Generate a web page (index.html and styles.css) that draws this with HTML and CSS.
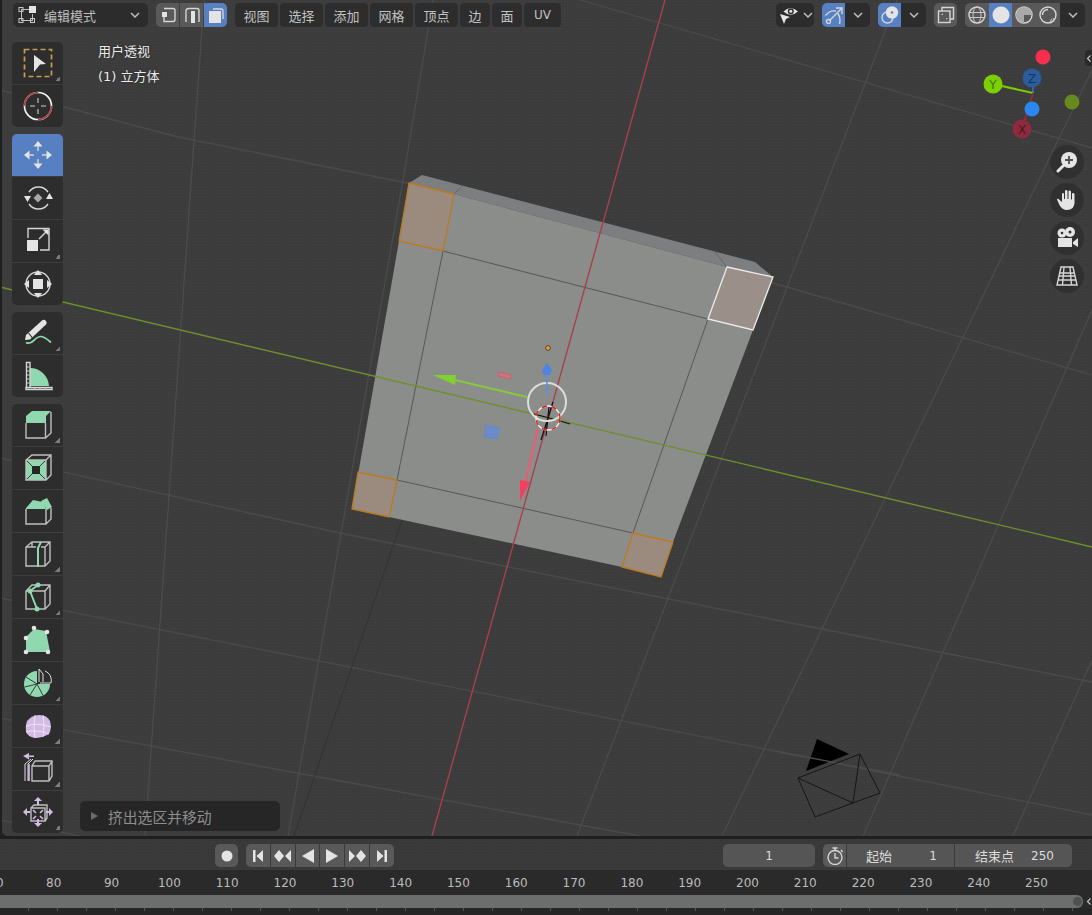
FILE: index.html
```html
<!DOCTYPE html>
<html lang="zh">
<head>
<meta charset="utf-8">
<title>Blender 编辑模式</title>
<link rel="stylesheet" href="styles.css">
</head>
<body>
<div class="workspace">
  <div class="edge"></div>
  <main class="viewport">
    <svg class="scene" viewBox="2 0 1090 836" xmlns="http://www.w3.org/2000/svg">
      <g class="grid">
        <path d="M204 0L145 836M433 0L403 180L288 836M897 0L577 836M1092 70L722 836M1092 310L863 836M1092 660L1013 836"/>
        <path d="M0 90L178 137L407 183L773 283L1092 375M580 0L760 52L1092 148M0 458L340 533L623 590L1092 682M0 598L780 752L1092 815M0 718L297 773L640 836M0 820L80 836"/>
      </g>
      <path class="thin-dark" d="M402 520L294 836"/>
      <g class="camera">
        <path class="camera-tri" d="M817 739L849 754L806 771Z"/>
        <path class="grid-over" d="M780 752L900 775"/>
        <path class="camera-frame" d="M798 778L860 754L880 793L815 817ZM798 778L853 803M860 754L853 803"/>
      </g>
      <polygon class="cube-top" points="409,183 422,175 755,262 773,277 727,267 454,194"/>
      <polygon class="cube-face" points="409,183 454,194 727,267 773,277 753,330 673,542 661,577 622,567 389,517 352,509 399,241"/>
      <path class="cube-edge-soft" d="M454 194L462 186M727 267L715 252"/>
      <path class="cube-edge" d="M443 251L708 319L633 533L397 480Z"/>
      <polygon class="face-sel" points="409,183 454,194 443,251 399,241"/>
      <polygon class="face-sel" points="358,472 397,480 389,517 352,509"/>
      <polygon class="face-sel" points="633,533 673,542 661,577 622,567"/>
      <polygon class="face-active" points="727,267 773,277 753,330 708,319"/>
      <path class="axis-green" d="M0 287L1092 547"/>
      <path class="axis-red" d="M665 0L432 836"/>
      <g class="manip">
        <path class="black" d="M534 414L553 419M560 421L570 424M553 402L541 440M549 407L546 436"/>
        <circle class="ring" cx="547" cy="402" r="19"/>
        <circle class="cur-white" cx="548" cy="418" r="12"/>
        <circle class="cur-red" cx="548" cy="418" r="12"/>
        <circle class="origin" cx="548" cy="348" r="2.4"/>
        <path class="shaft-blue" d="M547 396V373"/>
        <path class="fill-blue" d="M547 363L552 370L550 375H544L542 370Z"/>
        <path class="shaft-green" d="M527 397L455 380"/>
        <path class="fill-green" d="M456 375L433 375L455 385Z"/>
        <path class="shaft-red" d="M538 428L525 483"/>
        <path class="fill-red" d="M520 480L530 482L520 501Z"/>
        <path class="plane-red" d="M498 372L512 375L511 379L498 376Z"/>
        <path class="plane-blue" d="M486 425L500 428L497 439L484 437Z"/>
      </g>
      <g class="nav-gizmo">
        <path class="g-blue" d="M1033 93V80"/>
        <path class="g-green" d="M1033 93L993 84"/>
        <path class="g-red" d="M1033 93L1022 129"/>
        <circle class="d-red" cx="1043" cy="57" r="7.5"/>
        <circle class="d-olive" cx="1072" cy="102" r="7.5"/>
        <circle class="d-z" cx="1032" cy="78" r="9.5"/>
        <circle class="d-y" cx="993" cy="84" r="9.5"/>
        <circle class="d-x" cx="1022" cy="129" r="9.5"/>
        <circle class="d-blue" cx="1032" cy="109" r="7.5"/>
        <text class="g-z" x="1032" y="82.5">Z</text>
        <text class="g-y" x="993" y="88.5">Y</text>
        <text class="g-x" x="1022" y="133.5">X</text>
      </g>
    </svg>

    <header class="topbar">
      <div class="mode">
        <svg class="ic18" viewBox="0 0 18 18"><path class="st" d="M3 3.500H12M3.500 3V14M3 14.500H15M14.500 8V14"/><rect class="fw" x="11" y="0" width="7" height="7"/><rect class="bx" x="1" y="1.500" width="4" height="4"/><rect class="bx" x="1" y="12.500" width="4" height="4"/><rect class="bx" x="12.500" y="12.500" width="4" height="4"/></svg>
        <span class="mode-label">编辑模式</span>
        <svg class="chev" viewBox="0 0 10 6"><path d="M1 1L5 5L9 1"/></svg>
      </div>
      <div class="seg sel-mode">
        <button class="seg-btn gray w23"><svg class="ic18" viewBox="0 0 18 18"><path class="st2" d="M5 2.500H14Q16 2.500 16 4.500V13Q16 15.500 14 15.500H5V11"/><rect class="fw" x="3" y="6" width="5" height="5"/></svg></button>
        <button class="seg-btn gray w23"><svg class="ic18" viewBox="0 0 18 18"><path class="st2" d="M3 16V5Q3 2.500 6 2.500H14Q16 2.500 16 4.500V16"/><rect class="fw" x="8" y="5" width="4" height="12"/></svg></button>
        <button class="seg-btn blue w23"><svg class="ic18" viewBox="0 0 18 18"><path class="st2" d="M6 3H14Q16 3 16 5V13"/><rect class="fw" x="2" y="5" width="12" height="12"/></svg></button>
      </div>
      <nav class="menus">
        <span class="menu w43">视图</span><span class="menu w43">选择</span><span class="menu w43">添加</span><span class="menu w43">网格</span><span class="menu w43">顶点</span><span class="menu w30">边</span><span class="menu w30">面</span><span class="menu w37 latin">UV</span>
      </nav>
      <div class="right-tools">
        <div class="drop dark eye">
          <svg class="ic18" viewBox="0 0 18 18"><path class="fw" d="M3.500 5.500Q10.500 -1.500 18 5.500Q10.500 12 3.500 5.500Z"/><circle class="hole" cx="10.800" cy="5.300" r="3"/><circle class="fw" cx="10.800" cy="5.300" r="1.500"/><path class="fw" d="M0 8L10 11L6 13L4 18Z"/></svg>
          <svg class="chev" viewBox="0 0 10 6"><path d="M1 1L5 5L9 1"/></svg>
        </div>
        <div class="seg">
          <button class="seg-btn blue w23"><svg class="ic18" viewBox="0 0 18 18"><path class="st2" d="M0.500 9.500Q5 4 11 5M4.800 14.200L16.500 2.500M11 2H17V8M13 7.500Q16 12 14.500 18"/><circle class="st2" cx="3.500" cy="15.500" r="2"/></svg></button>
          <button class="seg-btn dark w25"><svg class="chev" viewBox="0 0 10 6"><path d="M1 1L5 5L9 1"/></svg></button>
        </div>
        <div class="seg">
          <button class="seg-btn blue w23"><svg class="ic18" viewBox="0 0 18 18"><circle class="st2" cx="6.500" cy="11.500" r="5.500"/><circle class="fw" cx="11" cy="6.500" r="6.200"/><circle class="blue-hole" cx="11" cy="6.500" r="1.200"/></svg></button>
          <button class="seg-btn dark w25"><svg class="chev" viewBox="0 0 10 6"><path d="M1 1L5 5L9 1"/></svg></button>
        </div>
        <button class="seg-btn gray single"><svg class="ic18" viewBox="0 0 18 18"><path class="st2" d="M5 5V1.500H16.500V13H13"/><rect class="st2" x="1.500" y="5" width="11.500" height="11.500"/><path class="st1" d="M5 8V9M5 8H6M9 13H10V12"/></svg></button>
        <div class="seg">
          <button class="seg-btn gray w24"><svg class="ic18" viewBox="0 0 18 18"><circle class="st2" cx="9" cy="9" r="8"/><ellipse class="st1" cx="9" cy="9" rx="4" ry="8"/><path class="st1" d="M1 6.500H17M1 11.500H17"/></svg></button>
          <button class="seg-btn blue w23"><svg class="ic18" viewBox="0 0 18 18"><circle class="fw" cx="9" cy="9" r="8.500"/></svg></button>
          <button class="seg-btn gray w24"><svg class="ic18" viewBox="0 0 18 18"><circle class="st2" cx="9" cy="9" r="8"/><path class="fl" d="M9 1A8 8 0 0 0 1 9A8 8 0 0 0 9 17V9H17A8 8 0 0 0 9 1Z"/></svg></button>
          <button class="seg-btn gray w24"><svg class="ic18" viewBox="0 0 18 18"><circle class="st2" cx="9" cy="9" r="8"/><path class="st2" d="M3.500 9A5.500 5.500 0 0 1 9 3.500"/><path class="st1" d="M11 16L13 12.500M14 15L15 12"/></svg></button>
          <button class="seg-btn dark w25"><svg class="chev" viewBox="0 0 10 6"><path d="M1 1L5 5L9 1"/></svg></button>
        </div>
      </div>
    </header>

    <aside class="tools">
      <div class="tool-group">
        <div class="tool more"><svg class="ic30" viewBox="0 0 30 30"><rect class="dash" x="1.500" y="1.500" width="27" height="27"/><path class="fw" d="M11 7L23 16L17 16.500L11 24Z"/></svg></div>
        <div class="tool"><svg class="ic30" viewBox="0 0 30 30"><circle class="cw" cx="15" cy="15" r="13.500"/><circle class="cr" cx="15" cy="15" r="13.500"/><path class="st-g" d="M15 7V12M15 18V23M7 15H12M18 15H23"/></svg></div>
      </div>
      <div class="tool-group">
        <div class="tool active"><svg class="ic30" viewBox="0 0 30 30"><path class="fw" d="M15 1L19.500 6.500H10.500ZM15 29L10.500 23.500H19.500ZM1 15L6.500 10.500V19.500ZM29 15L23.500 19.500V10.500Z"/><path class="st2" d="M15 6V11M15 19V24M6 15H11M19 15H24"/></svg></div>
        <div class="tool"><svg class="ic30" viewBox="0 0 30 30"><path class="st2" d="M6 9A11.500 11.500 0 0 1 25 9M25 21A11.500 11.500 0 0 1 6 21"/><path class="fw" d="M1 13H8L4.500 19ZM23 16L26.500 10L30 16Z"/><path class="fg" d="M15 10.500L19.500 15L15 19.500L10.500 15Z"/></svg></div>
        <div class="tool more"><svg class="ic30" viewBox="0 0 30 30"><path class="st2" d="M5 12V2.500H26V24H17"/><rect class="fw" x="4" y="14" width="11" height="11"/><path class="st2" d="M16 13L24 5"/><path class="fw" d="M25.500 3.500V9.500L19.500 3.500Z"/></svg></div>
        <div class="tool"><svg class="ic30" viewBox="0 0 30 30"><circle class="st2" cx="15" cy="15" r="12"/><rect class="fw" x="10" y="10" width="10" height="10"/><path class="fw" d="M15 1L19 6H11ZM15 29L11 24H19ZM1 15L6 11V19ZM29 15L24 19V11Z"/></svg></div>
      </div>
      <div class="tool-group">
        <div class="tool more"><svg class="ic30" viewBox="0 0 30 30"><path class="fw" d="M3 17L19 2.500Q21 1 23 3Q24.500 5 23 6.500L7 21.500L2 22Z"/><path class="hair" d="M5.500 15L9.500 20"/><path class="st-mint" d="M3 24.500C9 28 12 18 18 18.500C22 19 24 21 28 24.500"/></svg></div>
        <div class="tool"><svg class="ic30" viewBox="0 0 30 30"><path class="fm" d="M7 25V7A19 19 0 0 1 26 25Z"/><path class="st2" d="M3 26.500H29V28.500H3ZM3.500 27V1.500H7V26"/><path class="st1" d="M4 6H7M4 10H7M4 14H7M4 18H7M4 22H7M12 27V29M17 27V29M22 27V29"/></svg></div>
      </div>
      <div class="tool-group">
        <div class="tool more"><svg class="ic30" viewBox="0 0 30 30"><path class="fm" d="M3 6L9 1H28L23 6V13H3Z"/><path class="st-c" d="M3 13V28H22.500V13M22.500 28L28 23V2"/></svg></div>
        <div class="tool"><svg class="ic30" viewBox="0 0 30 30"><path class="fm" d="M3 7H23V27H3Z"/><rect class="fd" x="9" y="13" width="8" height="8"/><path class="hair-d" d="M3 7L9 13M23 7L17 13M3 27L9 21M23 27L17 21"/><path class="st-c" d="M3 27V7L9 2H28V22L23 27ZM3 7H23V27M23 7L28 2"/></svg></div>
        <div class="tool"><svg class="ic30" viewBox="0 0 30 30"><path class="fm" d="M3 12L10 4L20 6L23 13H3Z"/><path class="fm" d="M18 5L24 2L29 11L24 14Z"/><path class="st-c" d="M3 13V28H23V13M23 28L28 23V12"/></svg></div>
        <div class="tool more"><svg class="ic30" viewBox="0 0 30 30"><path class="st-c" d="M3 27V8L9 3H27V22L22 27H3ZM3 8H13M22 27V8L27 3M9 3V8M18 8H22"/><path class="st-mint2" d="M15 28V9L18 3"/></svg></div>
        <div class="tool more"><svg class="ic30" viewBox="0 0 30 30"><path class="st-c" d="M3 27V9L9 3H27V22L22 27H3ZM3 9H22V27M22 9L27 3"/><path class="st-mint2" d="M7 9L15 3M7 9L14 27"/><circle class="fm" cx="15" cy="3" r="2.500"/><circle class="fm" cx="7" cy="9" r="2.500"/><circle class="fm" cx="14" cy="27" r="2.500"/></svg></div>
        <div class="tool"><svg class="ic30" viewBox="0 0 30 30"><path class="fm" d="M3 12L11 4L23 6L27 27H3Z"/><circle class="fw" cx="3" cy="13" r="2.300"/><circle class="fw" cx="11" cy="3" r="2.300"/><circle class="fw" cx="24" cy="7" r="2.300"/><circle class="fw" cx="3" cy="27" r="2.300"/><circle class="fw" cx="25" cy="27" r="2.300"/></svg></div>
        <div class="tool more"><svg class="ic30" viewBox="0 0 30 30"><path class="fm" d="M14 16V3A13 13 0 1 0 27 16Z"/><path class="hair-d" d="M14 16L3 9M14 16L1.500 19M14 16L7 27M14 16L20 27.500"/><path class="st-w1" d="M16 14V1L20 6V14M22 3C27 5 29 10 28 15H17"/></svg></div>
        <div class="tool more"><svg class="ic30" viewBox="0 0 30 30"><path class="fl2" d="M4 10Q9 4 16 4Q24 4 27 10Q29 18 26 23Q19 27 12 27Q5 26 3 21Q2 15 4 10Z"/><path class="hair-w" d="M3 15Q14 11 28 16M3 21Q14 18 26 23M12 4Q10 15 12 27M20 4Q22 15 20 26"/></svg></div>
        <div class="tool more"><svg class="ic30" viewBox="0 0 30 30"><path class="fl2" d="M0 2L6 -1V1.500H11V3H6V5.500Z"/><path class="st-c" d="M9 27H26L29 22V7H12L9 12V27ZM9 12H26V27M26 12L29 7"/><path class="st-w1" d="M5 27V10L10 5M2 27V10L8 5"/><path class="st-l" d="M6 27V10"/></svg></div>
        <div class="tool more"><svg class="ic30" viewBox="0 0 30 30"><path class="st-c" d="M8 11H22V24H8ZM8 11L11 8H24V21L22 24"/><path class="fl2" d="M15 0L19 4H16V8H14V4H11ZM15 30L11 26H14V22H16V26H19ZM0 15L4 11V14H7V16H4V19ZM30 15L26 19V16H23V14H26V11Z"/><path class="st-l" d="M10 13L13 16M20 13L17 16M10 22L13 19M20 22L17 19"/></svg></div>
      </div>
    </aside>

    <div class="overlay-text">
      <p>用户透视</p>
      <p>(1) 立方体</p>
    </div>

    <div class="nav-buttons">
      <button class="nav-btn"><svg class="ic22" viewBox="0 0 22 22"><circle class="nfill" cx="13" cy="9" r="8"/><path class="st-g2" d="M13 5V13M9 9H17"/><path class="thick" d="M7 15L2 20"/></svg></button>
      <button class="nav-btn"><svg class="ic22" viewBox="0 0 22 22"><path class="fw" d="M6 13V5Q6 4 7 4T8 5V10H9V2Q9 1 10 1T11.500 2V10H12.500V2.500Q12.500 1.500 13.500 1.500T15 2.500V10.500H16V5Q16 4 17 4T18.500 5V14Q18 21 11 21Q6 21 3.500 16L1 10.500Q1 9.500 2.500 10Z"/></svg></button>
      <button class="nav-btn"><svg class="ic22" viewBox="0 0 22 22"><circle class="fw" cx="6" cy="6" r="4.500"/><circle class="fw" cx="14" cy="5" r="5"/><circle class="nhole" cx="6" cy="6" r="1.300"/><circle class="nhole" cx="14" cy="5" r="1.500"/><rect class="fw" x="2" y="11" width="14" height="9"/><path class="fw" d="M17 15L22 11V20L17 17Z"/></svg></button>
      <button class="nav-btn"><svg class="ic22" viewBox="0 0 22 22"><path class="st2" d="M5 2H17L21 20H1ZM1.500 15H20.500M3.500 8H18.500M8 2L6.500 20M14 2L15.500 20M2.700 11H19.300"/></svg></button>
    </div>

    <div class="edge-tab top-tab"><svg class="tab-ic" viewBox="0 0 8 10"><path d="M6 1L2 5L6 9"/></svg></div>

    <div class="last-op">
      <span class="tri"></span>
      <span class="last-op-label">挤出选区并移动</span>
    </div>
  </main>
</div>

<footer class="timeline">
  <div class="tl-header">
    <button class="record"><svg class="ic12" viewBox="0 0 12 12"><circle class="fw" cx="6" cy="6" r="5.500"/></svg></button>
    <div class="play-group">
      <button class="play"><svg class="ic14" viewBox="0 0 14 14"><rect class="fw" x="2" y="1" width="2.500" height="12"/><path class="fw" d="M12 1V13L5.500 7Z"/></svg></button>
      <button class="play"><svg class="ic18" viewBox="0 0 18 14"><path class="fw" d="M5 1L10 7L5 13L0 7ZM17 1V13L11 7Z"/></svg></button>
      <button class="play"><svg class="ic14" viewBox="0 0 14 14"><path class="fw" d="M13 0V14L1 7Z"/></svg></button>
      <button class="play"><svg class="ic14" viewBox="0 0 14 14"><path class="fw" d="M1 0V14L13 7Z"/></svg></button>
      <button class="play"><svg class="ic18" viewBox="0 0 18 14"><path class="fw" d="M13 1L18 7L13 13L8 7ZM1 1V13L7 7Z"/></svg></button>
      <button class="play"><svg class="ic14" viewBox="0 0 14 14"><rect class="fw" x="9.500" y="1" width="2.500" height="12"/><path class="fw" d="M2 1V13L8.500 7Z"/></svg></button>
    </div>
    <div class="frame-field">1</div>
    <div class="range">
      <button class="timer"><svg class="ic18" viewBox="0 0 18 18"><circle class="st2" cx="9" cy="10.500" r="7"/><path class="st2" d="M6.500 1H11.500M9 1V3.500M15 3L16.500 5M9 6V11H12.500"/></svg></button>
      <div class="range-field start"><span>起始</span><span class="num">1</span></div>
      <div class="range-field end"><span>结束点</span><span class="num">250</span></div>
    </div>
  </div>
  <div class="ruler">
    <span class="mark first">70</span><span class="mark">80</span><span class="mark">90</span><span class="mark">100</span><span class="mark">110</span><span class="mark">120</span><span class="mark">130</span><span class="mark">140</span><span class="mark">150</span><span class="mark">160</span><span class="mark">170</span><span class="mark">180</span><span class="mark">190</span><span class="mark">200</span><span class="mark">210</span><span class="mark">220</span><span class="mark">230</span><span class="mark">240</span><span class="mark">250</span>
  </div>
  <div class="scroll-row">
    <div class="scrollbar"><span class="scroll-knob"></span></div>
    <div class="edge-tab bottom-tab"><svg class="tab-ic" viewBox="0 0 8 10"><path d="M6 1L2 5L6 9"/></svg></div>
  </div>
  <div class="ticks"></div>
</footer>
</body>
</html>
```

FILE: styles.css
```css
* { box-sizing: border-box; }
html, body { margin: 0; padding: 0; height: 100%; overflow: hidden; }
body {
  width: 1092px; height: 915px; background: #1d1d1d; color: #c8c8c8;
  font-family: "DejaVu Sans", "Noto Sans CJK SC", sans-serif; font-size: 13px;
  display: flex; flex-direction: column;
}
button { border: 0; padding: 0; margin: 0; font: inherit; color: inherit; display: flex; align-items: center; justify-content: center; background: none; }
p { margin: 0; }
svg { display: block; }

.workspace { display: flex; height: 836px; flex: none; }
.edge { width: 2px; background: #202020; flex: none; }
.viewport {
  flex: 1; position: relative; overflow: hidden; background-color: #3c3c3c;
  background-image: radial-gradient(rgba(255,255,255,.025) .6px, transparent .8px);
  background-size: 3px 3px; border-bottom-left-radius: 5px;
}
.scene { position: absolute; left: 0; top: 0; width: 1090px; height: 836px; }

/* scene */
.grid path { fill: none; stroke: #4b4b4b; stroke-width: 1.3; }
.thin-dark { fill: none; stroke: #333; stroke-width: 1; }
.camera-tri { fill: #000; }
.camera-frame { fill: none; stroke: #161616; stroke-width: 1; }
.grid-over { stroke: #4b4b4b; stroke-width: 1.3; }
.cube-top { fill: #7c7e7f; }
.cube-face { fill: #8b8d8b; }
.cube-edge-soft { stroke: #666; stroke-width: 1; fill: none; }
.cube-edge { stroke: #505252; stroke-width: .9; fill: none; }
.face-sel { fill: #9b8a7e; stroke: #bb7a1f; stroke-width: 1.3; }
.face-active { fill: #9b8f89; stroke: #ececec; stroke-width: 1.3; }
.axis-green { stroke: #6f8f2d; stroke-width: 1.4; fill: none; }
.axis-red { stroke: #a5404f; stroke-width: 1.4; fill: none; }
.black { stroke: #111; stroke-width: 1.2; fill: none; }
.ring { fill: none; stroke: #dcdcdc; stroke-width: 2; }
.cur-white { fill: none; stroke: #f0f0f0; stroke-width: 1.4; }
.cur-red { fill: none; stroke: #e01818; stroke-width: 1.4; stroke-dasharray: 5 5; }
.origin { fill: #f09a2a; stroke: #3a3a3a; stroke-width: .8; }
.shaft-blue { stroke: #5b8fe0; stroke-width: 1.6; fill: none; }
.fill-blue { fill: #4f85e0; }
.shaft-green { stroke: #86c93a; stroke-width: 2; fill: none; }
.fill-green { fill: #82d02f; }
.shaft-red { stroke: #ef5a72; stroke-width: 2; fill: none; }
.fill-red { fill: #f2405f; }
.plane-red { fill: #d4707c; stroke: #c05a6a; stroke-width: .6; }
.plane-blue { fill: #6c8bca; stroke: #5f86d0; stroke-width: .6; }
.g-blue { stroke: #2a69c0; stroke-width: 2; }
.g-green { stroke: #7ccc00; stroke-width: 2; }
.g-red { stroke: #8f2c40; stroke-width: 2; }
.d-red { fill: #f5304f; }
.d-olive { fill: #678a1f; }
.d-z { fill: #2c5c9c; }
.d-y { fill: #7ccf00; }
.d-x { fill: #8e2a3f; }
.d-blue { fill: #2a87f0; }
.nav-gizmo text { font-family: "DejaVu Sans", sans-serif; font-size: 12px; text-anchor: middle; }
.g-z { fill: #16365f; }
.g-y { fill: #426f00; }
.g-x { fill: #4f1522; }

/* icon parts */
.ic12 { width: 12px; height: 12px; }
.ic14 { width: 14px; height: 14px; }
.ic18 { width: 18px; height: 18px; flex: none; }
.ic22 { width: 22px; height: 22px; }
.ic30 { width: 30px; height: 30px; overflow: visible; }
.fw { fill: #e4e4e4; }
.fg { fill: #a8a8a8; }
.fm { fill: #8fd8b0; }
.fl { fill: #a9a9a9; }
.fl2 { fill: #d3bbe6; }
.fd { fill: #272727; }
.st { fill: none; stroke: #bdbdbd; stroke-width: 1; }
.st1 { fill: none; stroke: #c8c8c8; stroke-width: 1; }
.st2 { fill: none; stroke: #d6d6d6; stroke-width: 1.4; }
.st-g { fill: none; stroke: #9a9a9a; stroke-width: 1.6; }
.st-g2 { fill: none; stroke: #505050; stroke-width: 1.8; }
.st-c { fill: none; stroke: #bfbfbf; stroke-width: 1.4; }
.st-w1 { fill: none; stroke: #e0e0e0; stroke-width: 1; }
.st-l { fill: none; stroke: #d3bbe6; stroke-width: 1.6; }
.st-mint { fill: none; stroke: #8fd8b0; stroke-width: 1.7; }
.st-mint2 { fill: none; stroke: #8fd8b0; stroke-width: 2; }
.hair { stroke: #2c2d2c; stroke-width: 1.2; fill: none; }
.hair-d { stroke: #2c2d2c; stroke-width: .9; fill: none; }
.hair-w { stroke: #f3eef6; stroke-width: .8; fill: none; }
.bx { fill: none; stroke: #c6c6c6; stroke-width: 1; }
.hole { fill: #2b2c2b; }
.blue-hole { fill: #5680c2; }
.nfill { fill: #e4e4e4; }
.thick { stroke: #e4e4e4; stroke-width: 3; stroke-linecap: round; fill: none; }
.nhole { fill: #333; }
.dash { fill: none; stroke: #c99c55; stroke-width: 1.7; stroke-dasharray: 5 3; }
.cw { fill: none; stroke: #f2f2f2; stroke-width: 1.7; }
.cr { fill: none; stroke: #a83a46; stroke-width: 1.7; stroke-dasharray: 21 21.4; }

/* top bar */
.topbar { position: relative; display: flex; align-items: flex-start; height: 27px; padding: 3px 7px 0 11px; }
.mode {
  width: 135px; height: 24px; background: #2b2c2b; border-radius: 5px; display: flex; align-items: center;
  padding: 0 8px 0 5px; gap: 8px; font-family: "Noto Sans CJK SC", sans-serif; font-size: 13px; color: #bdbdbd;
}
.mode-label { flex: 1; }
.chev { width: 10px; height: 6px; flex: none; }
.chev path { fill: none; stroke: #bdbdbd; stroke-width: 1.5; }
.seg { display: flex; height: 24px; border-radius: 5px; overflow: hidden; }
.seg-btn { height: 24px; width: 24px; }
.gray { background: #595959; }
.blue { background: #5680c2; }
.dark { background: #2b2c2b; }
.sel-mode { margin-left: 8px; gap: 1px; }
.w23 { width: 23px; }
.w24 { width: 24px; }
.w25 { width: 25px; }
.menus { display: flex; gap: 2px; margin-left: 8px; font-family: "Noto Sans CJK SC", sans-serif; font-size: 13px; }
.menu { height: 24px; background: #2c2d2c; border-radius: 4px; display: flex; align-items: center; justify-content: center; color: #c2c2c2; }
.w43 { width: 43px; }
.w30 { width: 30px; }
.w37 { width: 37px; }
.latin { font-family: "DejaVu Sans", sans-serif; font-size: 12px; }
.right-tools { margin-left: auto; display: flex; align-items: flex-start; gap: 8px; }
.drop { width: 38px; height: 24px; border-radius: 5px; display: flex; align-items: center; gap: 5px; padding-left: 4px; }
.single { border-radius: 5px; width: 23px; }

/* tools */
.tools { position: relative; margin: 15px 0 0 10px; width: 51px; display: flex; flex-direction: column; gap: 7px; }
.tool-group { display: flex; flex-direction: column; gap: 1px; border-radius: 5px; overflow: hidden; flex: none; }
.tool { position: relative; height: 42px; background: #2c2d2c; display: flex; align-items: center; justify-content: center; flex: none; }
.tool.active { background: #5680c2; }
.tool.more::after {
  content: ""; position: absolute; right: 3px; bottom: 3px; width: 5px; height: 5px;
  background: linear-gradient(135deg, transparent 50%, #7a7a7a 50%);
}

.overlay-text {
  position: absolute; left: 96px; top: 42px; display: flex; flex-direction: column; gap: 6px;
  font-family: "DejaVu Sans", "Noto Sans CJK SC", sans-serif; font-size: 13px; line-height: 19px;
  color: #ececec; text-shadow: 0 0 2px #222;
}

.nav-buttons { position: absolute; right: 8px; top: 145px; display: flex; flex-direction: column; gap: 4px; }
.nav-btn { width: 34px; height: 34px; border-radius: 50%; background: #303030; }

.edge-tab { background: #2a2a2a; border-radius: 4px 0 0 4px; width: 7px; height: 16px; display: flex; align-items: center; justify-content: center; }
.top-tab { position: absolute; right: 0; top: 50px; }
.tab-ic { width: 6px; height: 9px; }
.tab-ic path { fill: none; stroke: #c8c8c8; stroke-width: 1.5; }

.last-op {
  position: absolute; left: 78px; bottom: 5px; width: 200px; height: 30px; background: #262626; border-radius: 5px;
  display: flex; align-items: center; padding-left: 11px; gap: 10px;
  font-family: "Noto Sans CJK SC", sans-serif; font-size: 14.8px; color: #8e8e8e;
}
.tri { width: 0; height: 0; border-left: 7px solid #6e6e6e; border-top: 4px solid transparent; border-bottom: 4px solid transparent; }

/* timeline */
.timeline { flex: 1; display: flex; flex-direction: column; background: #1f1f1f; padding-top: 3px; }
.tl-header {
  height: 31px; background-color: #3a3a3a; display: flex; align-items: center; padding: 2px 0 0 215px; flex: none;
  background-image: radial-gradient(rgba(0,0,0,.08) .6px, transparent .8px); background-size: 3px 3px;
}
.record { width: 23px; height: 23px; border-radius: 5px; background: #595959; }
.play-group { margin-left: 8px; width: 148px; height: 23px; display: flex; gap: 1px; border-radius: 5px; overflow: hidden; }
.play { flex: 1; background: #595959; }
.frame-field { margin-left: 329px; width: 92px; height: 23px; border-radius: 5px; background: #555; display: flex; align-items: center; justify-content: center; font-size: 12px; color: #dcdcdc; }
.range { margin-left: 8px; display: flex; height: 23px; border-radius: 5px; overflow: hidden; gap: 1px; font-family: "DejaVu Sans", "Noto Sans CJK SC", sans-serif; color: #dcdcdc; }
.timer { width: 23px; background: #595959; }
.range-field { background: #555; display: flex; align-items: center; justify-content: space-between; font-size: 13px; }
.start { width: 107px; padding: 0 17px 0 19px; }
.end { width: 117px; padding: 0 18px 0 20px; }
.num { font-size: 12px; }
.ruler { height: 25px; background: #2a2a2a; display: flex; align-items: center; overflow: hidden; flex: none; font-size: 12px; color: #bcbcbc; }
.mark { flex: 0 0 57.82px; text-align: center; }
.first { margin-left: -33px; }
.scroll-row { height: 13px; background: #2a2a2a; display: flex; align-items: center; justify-content: space-between; flex: none; }
.scrollbar { width: 1083px; height: 13px; background: #6b6e6c; border-radius: 0 6px 6px 0; display: flex; align-items: center; justify-content: flex-end; padding-right: 1px; }
.scroll-knob { width: 9px; height: 9px; border-radius: 50%; background: #4f5150; }
.bottom-tab { height: 13px; }
.ticks {
  flex: 1; background-color: #262626;
  background-image: repeating-linear-gradient(90deg, transparent 0 28px, #555 28px 29px);
  background-size: 100% 3px; background-repeat: no-repeat;
}
```
